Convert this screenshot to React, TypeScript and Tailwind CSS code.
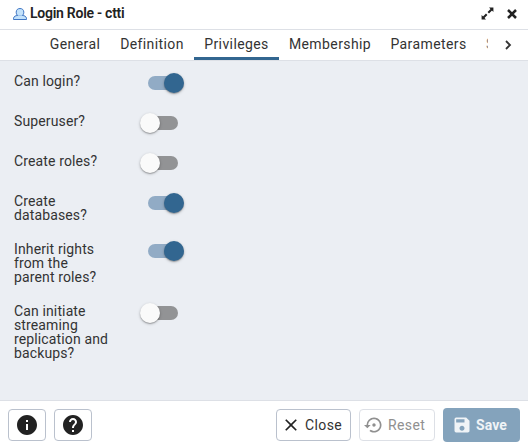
import React from "react";
import { MdInfo, MdHelp, MdClose, MdSettingsBackupRestore, MdSave } from "react-icons/md";

const tabs = [
  { name: "General", width: "w-[70px]" },
  { name: "Definition", width: "w-[84px]" },
  { name: "Privileges", width: "w-[85px]" },
  { name: "Membership", width: "w-[102px]" },
  { name: "Parameters", width: "w-[95px]" },
];

const options = [
  { label: "Can login?", on: true, height: "h-10" },
  { label: "Superuser?", on: false, height: "h-10" },
  { label: "Create roles?", on: false, height: "h-10" },
  { label: "Create databases?", on: true, height: "h-12" },
  { label: "Inherit rights from the parent roles?", on: true, height: "h-[62px]" },
  { label: "Can initiate streaming replication and backups?", on: false, height: "h-[76px]" },
];

function Toggle({ on }: { on: boolean }) {
  return (
    <div className={`mt-3 flex h-5 w-[46px] items-center ${on ? "justify-end" : "justify-start"}`}>
      {on && <span className="-mr-3.5 h-3.5 w-[30px] shrink-0 rounded-full bg-[#91abc5]" />}
      <span
        className={`z-10 h-5 w-5 shrink-0 rounded-full shadow-[0_1px_3px_rgba(0,0,0,0.25),0_1px_1px_rgba(0,0,0,0.2)] ${
          on ? "mr-0.5 bg-[#326690]" : "bg-[#fafafa]"
        }`}
      />
      {!on && <span className="-ml-3 h-3.5 w-[30px] shrink-0 rounded-full bg-[#929395]" />}
    </div>
  );
}

export default function App() {
  return (
    <div className="flex h-[448px] w-[528px] flex-col overflow-hidden bg-white font-[Roboto,sans-serif] text-sm text-[#333]">
      <header className="flex h-[30px] shrink-0 items-center border-b border-[#dde0e6] pl-[13px] pr-[11px] text-[#222]">
        <svg className="mt-[-2px] h-3 w-3.5" viewBox="0 0 14 12" fill="#c3e2fb" stroke="#3e75c4" strokeWidth="1">
          <path d="M.5 11.500V10.200C.9 8.500 2.500 7.500 4.500 7.500h5c2 0 3.600 1 4 2.700v1.300Z" />
          <path d="M4.800 7.700C3.600 6.800 3.200 5.500 3.200 4.200 3.200 2 4.600.5 7 .5s3.800 1.500 3.800 3.700c0 1.300-.4 2.600-1.600 3.500" />
        </svg>
        <h1 className="ml-[3px] mt-[-3px] text-sm font-semibold tracking-[-0.26px]">Login Role - ctti</h1>
        <svg className="ml-auto mr-px mt-[-2px] h-[13px] w-[13px]" viewBox="0 0 13 13" fill="#222">
          <path d="M8 .6h4.400V5ZM5 12.400H.6V8Z" />
          <path d="M11 2 7.300 5.700M5.700 7.300 2 11" fill="none" stroke="#222" strokeWidth="2" />
        </svg>
        <svg className="ml-3 mt-[-2px] h-[10px] w-[10px]" viewBox="0 0 10 10" fill="none" stroke="#222" strokeWidth="2.500">
          <path d="m1 1 8 8M9 1 1 9" />
        </svg>
      </header>
      <nav className="flex h-[31px] shrink-0 border-b border-[#dde0e6] pl-10">
        {tabs.map((tab) => (
          <div
            key={tab.name}
            className={`flex h-[30px] shrink-0 items-center justify-center pb-[3px] tracking-[0.4px] ${tab.width} ${
              tab.name === "Privileges" ? "border-b-[3px] border-[#326690] pt-[3px]" : ""
            }`}
          >
            {tab.name}
          </div>
        ))}
        <div className="ml-[10px] flex h-[27px] w-[2px] items-center overflow-hidden text-[#888]">S</div>
        <svg className="ml-[17px] mt-2.5 h-2.5 w-[7px]" viewBox="0 0 7 10" fill="none" stroke="#333" strokeWidth="1.800">
          <path d="m1 1 4 4-4 4" />
        </svg>
      </nav>
      <main className="flex-1 bg-[#ebeef3]">
        {options.map((option) => (
          <div key={option.label} className={`flex pl-3.5 ${option.height}`}>
            <div className="w-[126px] pt-[13px] pr-7 leading-[14px] tracking-[0.13px]">{option.label}</div>
            <Toggle on={option.on} />
          </div>
        ))}
      </main>
      <footer className="flex h-12 shrink-0 items-center gap-2 border-t border-[#dde0e6] pl-2 pr-2 tracking-[0.4px]">
        <div className="flex h-8 w-[38px] items-center justify-center rounded border border-[#bac1cd] text-[#222]">
          <MdInfo size={24} />
        </div>
        <div className="flex h-8 w-[38px] items-center justify-center rounded border border-[#bac1cd] text-[#222]">
          <MdHelp size={24} />
        </div>
        <div className="ml-auto flex h-8 w-[75px] items-center rounded border border-[#bac1cd] pl-1">
          <MdClose size={20} color="#222" />
          <span className="ml-1">Close</span>
        </div>
        <div className="flex h-8 w-[76px] items-center rounded border border-[#dde0e6] pl-1 text-[#909090]">
          <MdSettingsBackupRestore size={20} />
          <span className="ml-1">Reset</span>
        </div>
        <div className="flex h-[34px] w-[77px] items-center rounded bg-[#84a3bc] pl-[9px] font-bold tracking-[0.1px] text-[#f0f4f7]">
          <MdSave size={20} />
          <span className="ml-1">Save</span>
        </div>
      </footer>
    </div>
  );
}
